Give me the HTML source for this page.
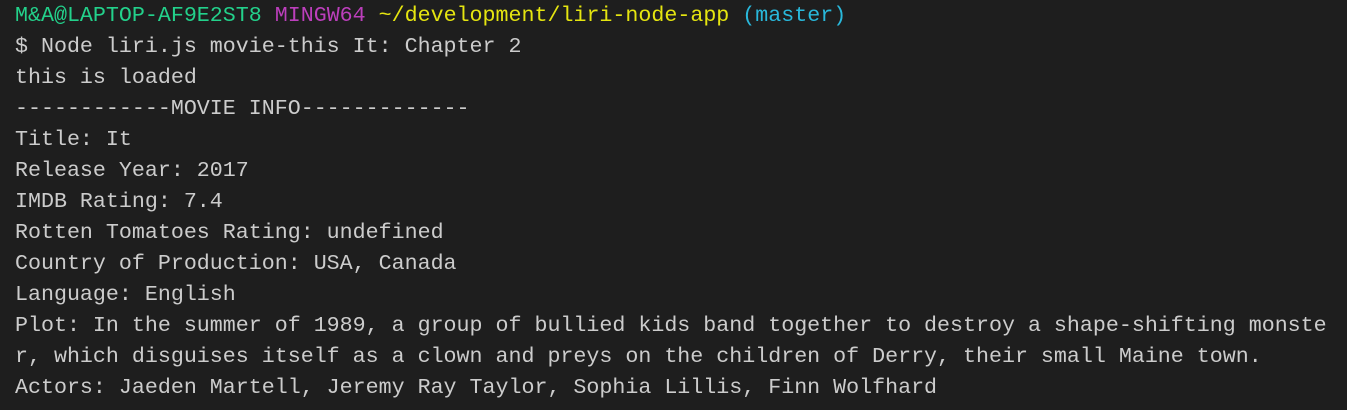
<!DOCTYPE html>
<html><head><style>
body{margin:0;background:#1e1e1e;width:1347px;height:410px;overflow:hidden}
pre{margin:0;padding:0 0 0 15px;font-family:"Liberation Mono",monospace;font-size:21.65px;line-height:31px;color:#cccccc;position:relative;top:0px;white-space:pre}
.g{color:#23d18b}.m{color:#bc3fbc}.y{color:#e5e510}.c{color:#29b8db}
</style></head><body><pre><span class="g">M&amp;A@LAPTOP-AF9E2ST8</span> <span class="m">MINGW64</span> <span class="y">~/development/liri-node-app</span> <span class="c">(master)</span>
$ Node liri.js movie-this It: Chapter 2
this is loaded
------------MOVIE INFO-------------
Title: It
Release Year: 2017
IMDB Rating: 7.4
Rotten Tomatoes Rating: undefined
Country of Production: USA, Canada
Language: English
Plot: In the summer of 1989, a group of bullied kids band together to destroy a shape-shifting monste
r, which disguises itself as a clown and preys on the children of Derry, their small Maine town.
Actors: Jaeden Martell, Jeremy Ray Taylor, Sophia Lillis, Finn Wolfhard</pre></body></html>
